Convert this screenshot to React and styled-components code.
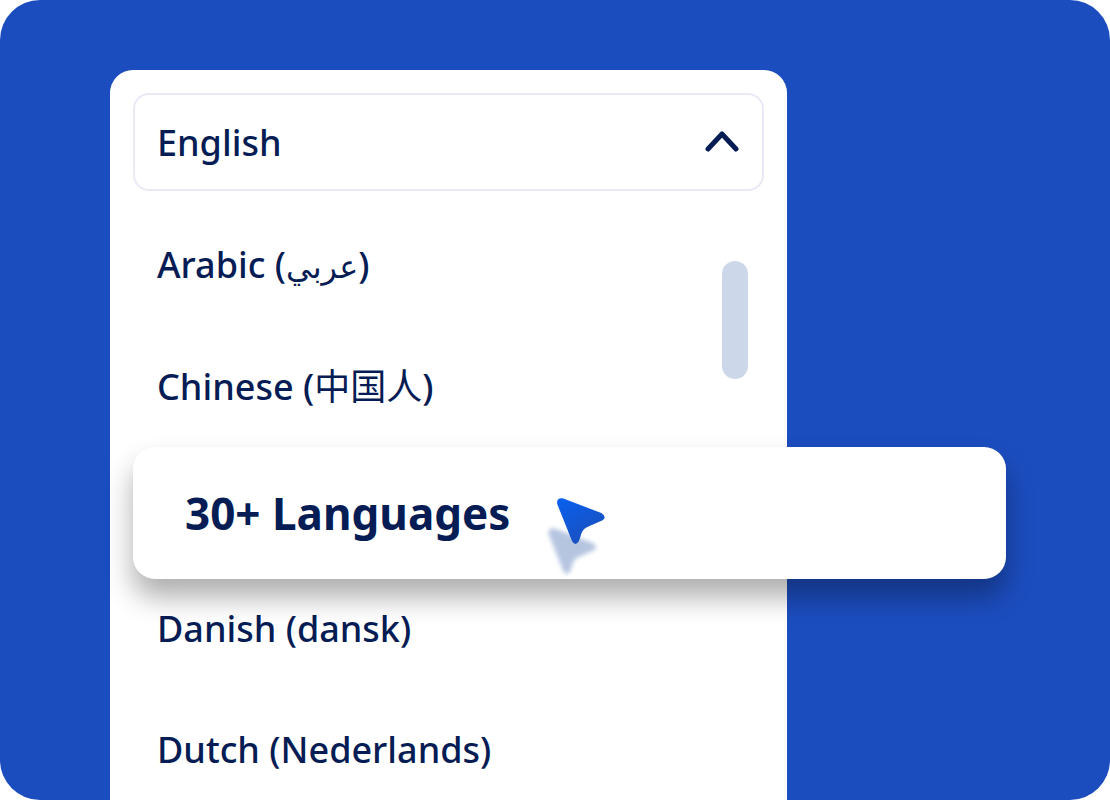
import styled, { createGlobalStyle } from 'styled-components'

const languages = [
  { name: 'Arabic', native: 'عربي', lang: 'ar' },
  { name: 'Chinese', native: '中国人', lang: 'zh' },
  { featured: true, name: '30+ Languages' },
  { name: 'Danish', native: 'dansk', lang: 'da' },
  { name: 'Dutch', native: 'Nederlands', lang: 'nl' },
]

function App() {
  return (
    <>
      <GlobalStyle />
      <Stage>
        <Panel>
          <Trigger type="button" aria-expanded="true" aria-controls="languages">
            English
            <Chevron viewBox="0 0 36 24" aria-hidden="true">
              <path d="M4 18 18 3 32 18" />
            </Chevron>
          </Trigger>
          <List id="languages">
            {languages.map((language) =>
              language.featured ? (
                <FeaturedItem key={language.name}>
                  <FeaturedOption type="button">
                    {language.name}
                    <Cursor />
                  </FeaturedOption>
                </FeaturedItem>
              ) : (
                <li key={language.name}>
                  <Option type="button">
                    {language.name} (
                    <Native lang={language.lang}>{language.native}</Native>)
                  </Option>
                </li>
              )
            )}
            <Thumb aria-hidden="true" />
          </List>
        </Panel>
      </Stage>
    </>
  )
}

function Cursor() {
  const arrow =
    'M40 28Q36 8 56 10L172 54Q190 66 176 76L135 94Q118 100 112 116L105 138Q94 156 84 138Z'
  return (
    <CursorSvg viewBox="0 0 198 252" aria-hidden="true">
      <defs>
        <linearGradient id="cursorFill" x1="0" y1="0" x2="0.6" y2="1">
          <stop offset="0" stopColor="#0860f0" />
          <stop offset="1" stopColor="#1a50bd" />
        </linearGradient>
        <filter id="cursorBlur" x="-30%" y="-30%" width="160%" height="160%">
          <feGaussianBlur stdDeviation="6" />
        </filter>
      </defs>
      <path
        d={arrow}
        transform="translate(-26 90)"
        fill="#1c4da0"
        opacity="0.32"
        filter="url(#cursorBlur)"
      />
      <path d={arrow} fill="url(#cursorFill)" />
    </CursorSvg>
  )
}

const GlobalStyle = createGlobalStyle`
  * {
    box-sizing: border-box;
  }
  body {
    margin: 0;
    background: #fff;
    font-family: 'Noto Sans', 'Noto Sans CJK SC', 'DejaVu Sans', sans-serif;
    color: #061c54;
  }
`
const Stage = styled.main`
  height: 100vh;
  padding: 70px 0 0 110px;
  overflow: hidden;
  border-radius: 40px;
  background: #1c4dbf;
`
const Panel = styled.section`
  width: 67.7%;
  min-height: 100%;
  padding: 23px;
  border-radius: 23px 23px 0 0;
  background: #fff;
`
const BaseButton = styled.button`
  display: flex;
  align-items: center;
  width: 100%;
  border: none;
  background: #fff;
  color: inherit;
  font-family: inherit;
  font-size: 36px;
  font-weight: 500;
  line-height: 48px;
  text-align: left;
  cursor: pointer;
`
const Trigger = styled(BaseButton)`
  justify-content: space-between;
  padding: 24px 22px 22px;
  border: 2px solid #e8e9f4;
  border-radius: 16px;
`
const Chevron = styled.svg`
  width: 36px;
  height: 24px;
  fill: none;
  stroke: #061c54;
  stroke-width: 5;
  stroke-linecap: round;
  stroke-linejoin: round;
`
const List = styled.ul`
  position: relative;
  margin: 13px 0 0;
  padding: 0;
  list-style: none;
`
const Option = styled(BaseButton)`
  display: block;
  padding: 37px 24px 36px;
`
const Native = styled.span`
  font-size: ${({ lang }) => (lang === 'ar' ? '32px' : 'inherit')};
  font-weight: ${({ lang }) => (lang === 'zh' ? 400 : 500)};
`
/* wider than the panel, so it sticks out on the right */
const FeaturedItem = styled.li`
  position: relative;
  z-index: 1;
  width: 138.4%;
  margin-bottom: -11px;
`
const FeaturedOption = styled(BaseButton)`
  gap: 34px;
  min-height: 132px;
  padding: 0 52px;
  border-radius: 22px;
  box-shadow: 0 18px 28px rgba(0, 0, 0, 0.32);
  font-size: 44px;
  font-weight: 700;
`
const CursorSvg = styled.svg`
  align-self: flex-end;
  width: 66px;
  height: 84px;
`
const Thumb = styled.li`
  position: absolute;
  top: 57px;
  right: 16px;
  width: 26px;
  height: 118px;
  border-radius: 13px;
  background: #cdd7ea;
`

export default App
